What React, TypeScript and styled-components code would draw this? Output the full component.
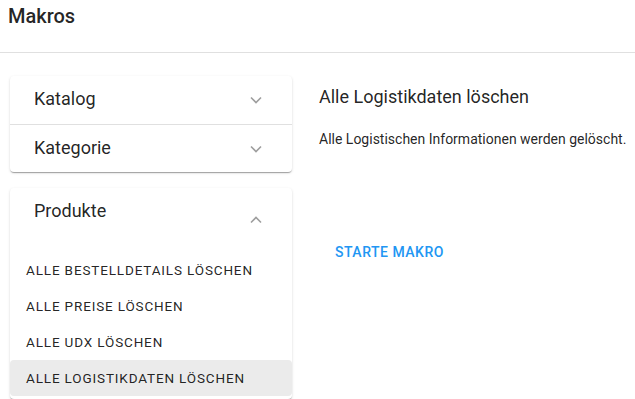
import React, { useState } from 'react';
import styled, { createGlobalStyle } from 'styled-components';

const GlobalStyle = createGlobalStyle`
  html, body {
    margin: 0;
    padding: 0;
    background: #fff;
    font-family: Roboto, "Liberation Sans", Arial, sans-serif;
    color: rgba(0, 0, 0, 0.87);
  }
`;

const Page = styled.div`
  width: 635px;
  height: 399px;
  overflow: hidden;
`;

const TopBar = styled.header`
  height: 53px;
  border-bottom: 1px solid #e0e0e0;
  padding: 5px 8px 0;
  box-sizing: border-box;
`;

const Title = styled.h1`
  margin: 0;
  font-size: 20px;
  font-weight: 500;
  line-height: 22px;
`;

const Body = styled.main`
  display: grid;
  grid-template-columns: 282px 1fr;
  column-gap: 27px;
  padding: 23px 0 0 10px;
`;

const Sidebar = styled.div`
  display: flex;
  flex-direction: column;
  gap: 16px;
`;

const Panel = styled.section`
  background: #fff;
  border-radius: 4px;
  box-shadow: 0 2px 1px -1px rgba(0, 0, 0, 0.2), 0 1px 1px 0 rgba(0, 0, 0, 0.14),
    0 1px 3px 0 rgba(0, 0, 0, 0.12);
`;

const Summary = styled.button<{ $open?: boolean; $divider?: boolean }>`
  display: flex;
  width: 100%;
  height: ${(p) => (p.$open ? 64 : 48)}px;
  padding: 0 0 0 24px;
  border: none;
  border-top: ${(p) => (p.$divider ? '1px solid #e0e0e0' : 'none')};
  background: transparent;
  font: inherit;
  color: inherit;
  cursor: pointer;
  text-align: left;
  box-sizing: border-box;
`;

const SummaryLabel = styled.span`
  flex: 1;
  font-size: 18px;
  line-height: 46px;
`;

const ChevronBox = styled.span`
  width: 72px;
  display: flex;
  align-items: center;
  justify-content: center;
  color: #9e9e9e;
`;

const ItemList = styled.ul`
  list-style: none;
  margin: 0;
  padding: 0 0 3px;
`;

const Item = styled.li<{ $active?: boolean }>`
  height: 36px;
  display: flex;
  align-items: center;
  padding-left: 16px;
  border-radius: 4px;
  background: ${(p) => (p.$active ? '#ebebeb' : 'transparent')};
  font-size: 13.5px;
  font-weight: 400;
  letter-spacing: 0.85px;
  text-transform: uppercase;
  cursor: pointer;
`;

const Detail = styled.div`
  padding-top: 9px;
`;

const DetailTitle = styled.h2`
  margin: 0;
  font-size: 18px;
  font-weight: 400;
  line-height: 24px;
`;

const DetailText = styled.p`
  margin: 20px 0 0;
  font-size: 14px;
  line-height: 20px;
`;

const ActionButton = styled.button`
  margin-top: 85px;
  height: 36px;
  padding: 0 16px;
  border: none;
  background: transparent;
  color: #2196f3;
  font-family: inherit;
  font-size: 14px;
  font-weight: 500;
  letter-spacing: 0.5px;
  cursor: pointer;
`;

function Chevron({ up }: { up?: boolean }): JSX.Element {
  return (
    <svg width="12" height="8" viewBox="0 0 12 8" fill="none">
      <path
        d={up ? 'M1 6.5 L6 1.5 L11 6.5' : 'M1 1.5 L6 6.5 L11 1.5'}
        stroke="currentColor"
        strokeWidth="1.6"
      />
    </svg>
  );
}

const produkte = [
  'Alle Bestelldetails löschen',
  'Alle Preise löschen',
  'Alle UDX löschen',
  'Alle Logistikdaten löschen',
];

export default function App(): JSX.Element {
  const [active, setActive] = useState(3);

  return (
    <Page>
      <GlobalStyle />
      <TopBar>
        <Title>Makros</Title>
      </TopBar>
      <Body>
        <Sidebar>
          <Panel>
            <Summary>
              <SummaryLabel>Katalog</SummaryLabel>
              <ChevronBox>
                <Chevron />
              </ChevronBox>
            </Summary>
            <Summary $divider>
              <SummaryLabel>Kategorie</SummaryLabel>
              <ChevronBox>
                <Chevron />
              </ChevronBox>
            </Summary>
          </Panel>
          <Panel>
            <Summary $open>
              <SummaryLabel>Produkte</SummaryLabel>
              <ChevronBox>
                <Chevron up />
              </ChevronBox>
            </Summary>
            <ItemList>
              {produkte.map((name, i) => (
                <Item key={name} $active={i === active} onClick={() => setActive(i)}>
                  {name}
                </Item>
              ))}
            </ItemList>
          </Panel>
        </Sidebar>
        <Detail>
          <DetailTitle>Alle Logistikdaten löschen</DetailTitle>
          <DetailText>Alle Logistischen Informationen werden gelöscht.</DetailText>
          <ActionButton>STARTE MAKRO</ActionButton>
        </Detail>
      </Body>
    </Page>
  );
}
